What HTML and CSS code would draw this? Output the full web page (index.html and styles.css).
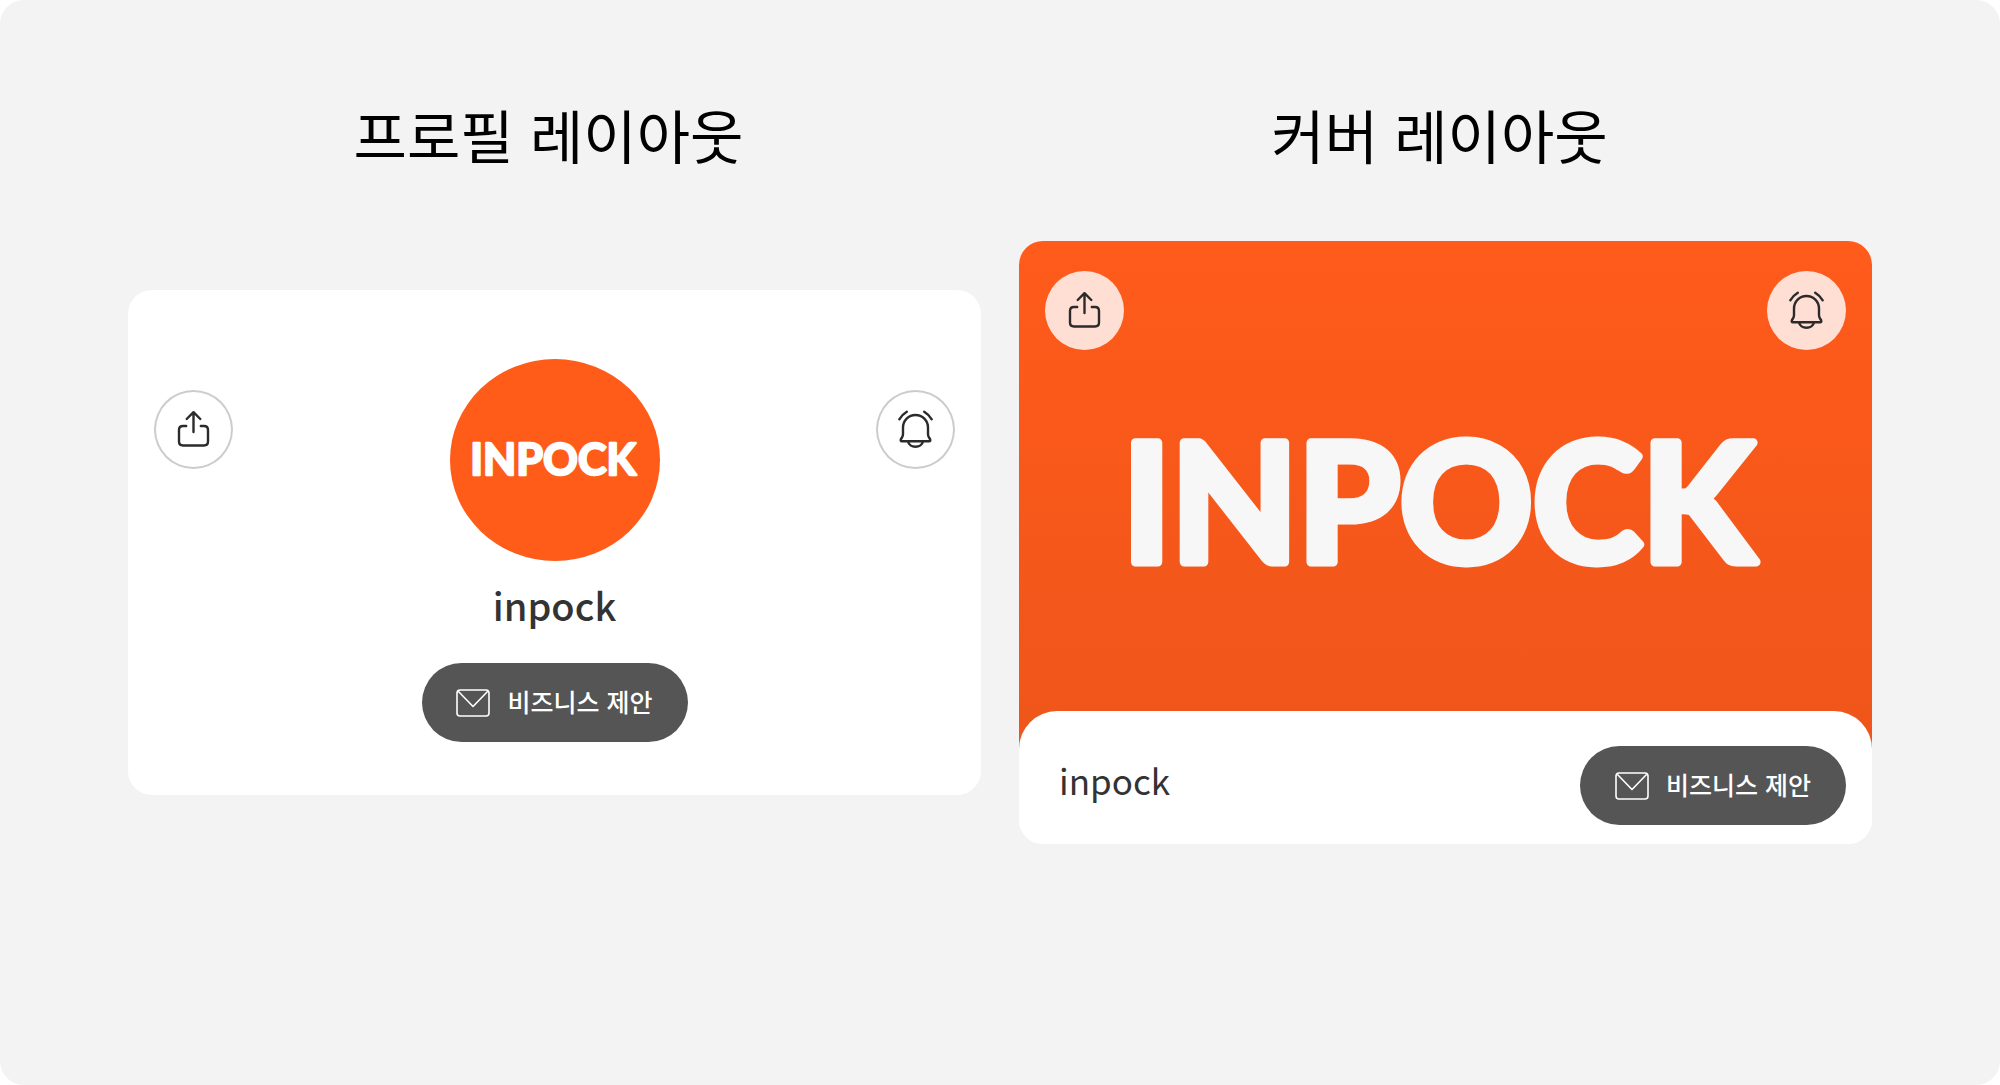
FILE: index.html
```html
<!DOCTYPE html>
<html lang="ko">
<head>
<meta charset="utf-8">
<meta name="viewport" content="width=device-width, initial-scale=1">
<title>프로필 레이아웃 / 커버 레이아웃</title>
<link rel="stylesheet" href="styles.css">
</head>
<body>
<svg class="sprite" aria-hidden="true">
  <symbol id="share" viewBox="0 0 79 79">
    <path d="M39.5 42V22.4M32.7 29l6.8-6.8 6.8 6.8M32.2 36H29q-4 0-4 4v11.500q0 4 4 4h21q4 0 4-4V40q0-4-4-4h-3.200"/>
  </symbol>
  <symbol id="bell" viewBox="0 0 79 79">
    <path d="M27 37.500a12.500 12.500 0 0 1 25 0V44q0 2 1 3.500l1 1.500q1 2.300-1 2.300H26q-2 0-1-2.300l1-1.500q1-1.500 1-3.500zM32 51.500a7.600 6.200 0 0 0 15 0M23.300 29.300q2.800-4.800 7.500-7.600M55.700 29.300q-2.800-4.800-7.500-7.600"/>
  </symbol>
  <symbol id="mail" viewBox="0 0 34 28">
    <path d="M4 1h26q3 0 3 3v20q0 3-3 3H4q-3 0-3-3V4q0-3 3-3zM2 2l15 15.500L32 2"/>
  </symbol>
</svg>
<main class="board">
  <section class="column">
    <h1 class="title">프로필 레이아웃</h1>
    <div class="stage">
      <article class="card profile">
        <button class="round outlined" type="button" aria-label="공유"><svg class="icon"><use href="#share"/></svg></button>
        <div class="identity">
          <div class="avatar">
            <svg class="wordmark" viewBox="0 0 642 132"><text class="letters" x="314" y="126">INPOCK</text></svg>
          </div>
          <h2 class="name strong">inpock</h2>
          <button class="offer" type="button"><svg class="mail"><use href="#mail"/></svg><span class="label">비즈니스 제안</span></button>
        </div>
        <button class="round outlined" type="button" aria-label="알림"><svg class="icon"><use href="#bell"/></svg></button>
      </article>
    </div>
  </section>
  <section class="column">
    <h1 class="title">커버 레이아웃</h1>
    <div class="stage">
      <article class="card">
        <div class="cover">
          <div class="actions">
            <button class="round" type="button" aria-label="공유"><svg class="icon"><use href="#share"/></svg></button>
            <button class="round" type="button" aria-label="알림"><svg class="icon"><use href="#bell"/></svg></button>
          </div>
          <svg class="wordmark" viewBox="0 0 642 132"><text class="letters tinted" x="314" y="126">INPOCK</text></svg>
        </div>
        <div class="panel">
          <h2 class="name">inpock</h2>
          <button class="offer" type="button"><svg class="mail"><use href="#mail"/></svg><span class="label">비즈니스 제안</span></button>
        </div>
      </article>
    </div>
  </section>
</main>
</body>
</html>
```

FILE: styles.css
```css
* { box-sizing: border-box; }

body {
  margin: 0;
  background: #fff;
  color: #333;
  font-family: "Noto Sans CJK KR", sans-serif;
}

h1, h2 { margin: 0; }

button {
  border: 0;
  padding: 0;
  font: inherit;
  cursor: pointer;
}

.sprite { position: absolute; width: 0; height: 0; }

.board {
  display: grid;
  grid-template-columns: 1fr 1fr;
  gap: 38px;
  align-items: start;
  min-height: 100vh;
  padding: 94px 128px;
  border-radius: 24px;
  background: #f3f3f3;
}

.column {
  display: flex;
  flex-direction: column;
}

.title {
  padding-right: 12px;
  color: #000;
  font-size: 58px;
  font-weight: 400;
  line-height: 80px;
  text-align: center;
}

.stage {
  display: flex;
  align-items: center;
  min-height: 602px;
  margin-top: 67px;
}

.card {
  width: 100%;
  border-radius: 24px;
  background: #fff;
  overflow: hidden;
}

.profile {
  display: flex;
  justify-content: space-between;
  align-items: flex-start;
  padding: 69px 26px 53px;
}

.round {
  flex: none;
  width: 79px;
  height: 79px;
  border-radius: 50%;
  background: #ffded3;
}

.outlined {
  margin-top: 31px;
  background: #fff;
  box-shadow: inset 0 0 0 2px #ccc;
}

.icon {
  display: block;
  width: 79px;
  height: 79px;
  fill: none;
  stroke: #2b2b2b;
  stroke-width: 2.4;
  stroke-linecap: round;
  stroke-linejoin: round;
}

.identity {
  display: flex;
  flex-direction: column;
  align-items: center;
}

.avatar {
  display: flex;
  justify-content: center;
  align-items: center;
  width: 210px;
  height: 202px;
  border-radius: 50%;
  background: #ff5c1a;
}

.wordmark {
  display: block;
  width: 80%;
  margin: 0 auto;
  overflow: visible;
}

.letters {
  fill: #fff;
  stroke: #fff;
  stroke-width: 9px;
  stroke-linejoin: round;
  font-family: Lato, sans-serif;
  font-size: 165px;
  font-weight: 700;
  text-anchor: middle;
}

.tinted { fill: #f7f7f7; stroke: #f7f7f7; }

.name {
  padding-bottom: 10px;
  font-size: 35px;
  font-weight: 400;
  line-height: 50px;
}

.strong {
  margin: 19px 0 23px;
  font-size: 38px;
  font-weight: 500;
}

.offer {
  display: flex;
  justify-content: center;
  align-items: center;
  gap: 17px;
  width: 266px;
  height: 79px;
  padding-top: 2px;
  border-radius: 40px;
  background: #555;
  color: #fff;
  font-size: 25px;
  font-weight: 500;
}

.label { padding-bottom: 5px; }

.mail {
  width: 34px;
  height: 28px;
  fill: none;
  stroke: #fff;
  stroke-width: 1.6;
  stroke-linejoin: round;
}

.cover {
  padding: 30px 26px 181px;
  background: linear-gradient(#ff5b1b, #ef551a);
}

.actions {
  display: flex;
  justify-content: space-between;
  margin-bottom: 86px;
}

.panel {
  display: flex;
  justify-content: space-between;
  align-items: center;
  margin-top: -38px;
  padding: 35px 26px 19px 40px;
  border-radius: 38px 38px 0 0;
  background: #fff;
}
```
